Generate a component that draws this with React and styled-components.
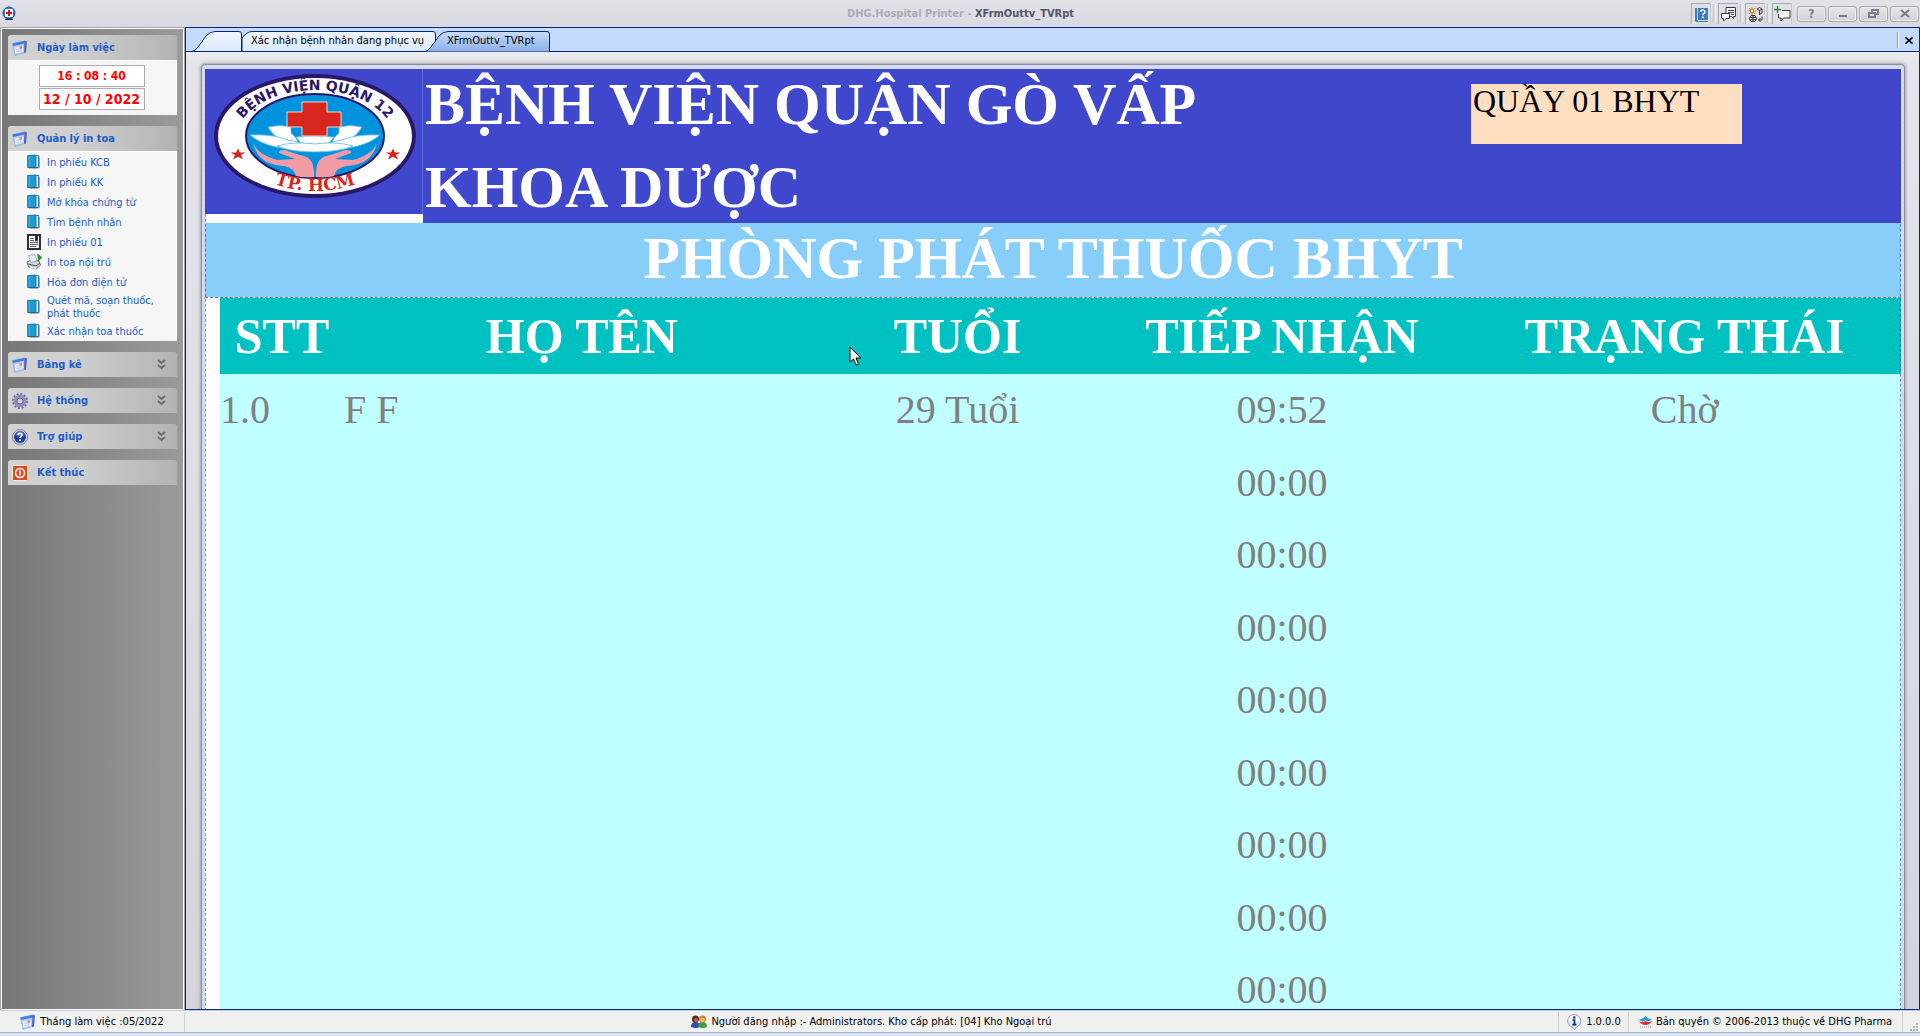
import React from "react";
import styled, { createGlobalStyle, css } from "styled-components";

const ui = `"DejaVu Sans Condensed", "Noto Sans", sans-serif`;
const serif = `"Liberation Serif", "Times New Roman", serif`;

const GlobalStyle = createGlobalStyle`
  *, *::before, *::after { box-sizing: border-box; }
  html, body { margin: 0; height: 100%; }
  body { font: 11px/13px ${ui}; color: #000; overflow: hidden; }
  button, input { font: inherit; color: inherit; padding: 0; margin: 0; }
  ul { list-style: none; margin: 0; padding: 0; }
  h1, h2, h3, p { margin: 0; }
  svg { display: block; flex: none; }
`;

const Shell = styled.div`
  height: 100vh;
  display: flex;
  flex-direction: column;
  background: #d9e4f2;
`;

const TitleBar = styled.header`
  flex: none;
  height: 27px;
  display: grid;
  grid-template-columns: 1fr auto 1fr;
  align-items: center;
  padding: 0 1px 0 2px;
  background: linear-gradient(#e2e3e8, #d8d9de);
`;

const Title = styled.h1`
  font: bold 11px/14px ${ui};
  color: #a9adb8;
  span { color: #54566a; }
`;

const TitleTools = styled.div`
  display: flex;
  align-items: center;
  justify-content: flex-end;
`;

const Tool = styled.button`
  width: 20px;
  height: 21px;
  display: grid;
  place-items: center;
  border: 1px solid #a9abb3;
  border-bottom: 0;
  border-right-color: #c9cbd1;
  background: #dfe0e5;
`;

const ToolRule = styled.span`
  width: 3px;
  height: 19px;
  margin: 0 2px;
  border-left: 1px solid #c0c2c8;
  border-right: 1px solid #f2f2f5;
`;

const WindowButtons = styled.div`
  display: flex;
  gap: 2px;
  margin-left: 5px;
`;

const WindowButton = styled.button`
  width: 29px;
  height: 16px;
  display: grid;
  place-items: center;
  border: 1px solid #a6a8b0;
  border-radius: 3px;
  background: linear-gradient(#e6e6ea, #d0d1d6);
  box-shadow: inset 0 0 0 1px #ededf0;
  font: bold 12px/14px ${ui};
  color: #7b7d88;
`;

const Work = styled.div`
  flex: 1;
  min-height: 0;
  display: flex;
`;

const Sidebar = styled.nav`
  flex: none;
  width: 185px;
  padding: 7px;
  display: flex;
  flex-direction: column;
  gap: 11px;
  border: 1px solid #a4a4a8;
  border-bottom: 0;
  box-shadow: inset 0 0 0 1px #fff;
  background: linear-gradient(90deg, #767676, #9b9b9b);
`;

const PanelHead = styled.button`
  width: 100%;
  height: 25px;
  display: flex;
  align-items: center;
  gap: 9px;
  padding: 0 11px 0 4px;
  border: 0;
  border-radius: 3px 3px 0 0;
  background: linear-gradient(90deg, #d2d2d2 0%, #cfcfcf 40%, #b3b3b3 100%);
  font: bold 11px/14px ${ui};
  color: #215dc6;
  text-align: left;
  span { flex: 1; }
`;

const PanelBody = styled.div`
  border: 1px solid #fff;
  border-bottom: 0;
  background: #f5f5f5;
`;

const Clock = styled(PanelBody)`
  display: flex;
  flex-direction: column;
  align-items: center;
  gap: 1px;
  padding: 4px 2px 5px 0;
`;

const ClockField = styled.input`
  width: 106px;
  height: 22px;
  border: 1px solid #acacac;
  background: #fff;
  color: #f00;
  text-align: center;
  font: bold ${(p) => (p.$large ? 14 : 12)}px/16px ${ui};
`;

const MenuLink = styled.a`
  min-height: ${(p) => (p.$tall ? 29 : 20)}px;
  display: flex;
  align-items: center;
  gap: 5px;
  padding-left: 17px;
  color: #215dc6;
  text-decoration: none;
`;

const Desk = styled.main`
  flex: 1;
  min-width: 0;
  display: flex;
  flex-direction: column;
  border: 1px solid #00287e;
  background: #e4e6ea;
`;

const TabBar = styled.div`
  flex: none;
  height: 24px;
  display: flex;
  align-items: flex-end;
  justify-content: space-between;
  border-bottom: 1px solid #00287e;
  background: #c4dafa;
`;

const Tabs = styled.div`
  display: flex;
  padding-left: 6px;
  margin-bottom: -1px;
`;

const Tab = styled.button`
  position: relative;
  height: 21px;
  width: ${(p) => p.$width}px;
  margin-right: ${(p) => (p.$overlap ? -11 : 0)}px;
  padding: 0 0 2px ${(p) => p.$pad}px;
  border: 0;
  background: none;
  text-align: left;
  white-space: nowrap;
  z-index: ${(p) => (p.$active ? 1 : 0)};
  svg { position: absolute; inset: 0; z-index: -1; }
`;

const CloseTab = styled.button`
  width: 22px;
  height: 16px;
  margin-bottom: 3px;
  display: grid;
  place-items: center;
  border: 0;
  border-left: 1px solid #6f9bd8;
  box-shadow: inset 1px 0 0 #fff;
  background: none;
`;

const Preview = styled.div`
  flex: 1;
  min-height: 0;
  padding: 12px 14px 0 15px;
  overflow: hidden;
  background: linear-gradient(#ebecf0, #e3e5ea 10px, #d3d5da);
`;

const Sheet = styled.article`
  border: 1px solid #8c8d96;
  border-radius: 4px 4px 0 0;
  padding: 4px 3px 0;
  background: #d5daf3;
  box-shadow: 0 0 3px 1px #a5a6ac;
`;

const Paper = styled.div`
  position: relative;
  background: #fff;
  font-family: ${serif};
  &::before {
    content: "";
    position: absolute;
    inset: 0;
    border: 1px dashed rgba(70, 70, 70, 0.6);
    border-width: 0 1px;
    pointer-events: none;
  }
`;

const Banner = styled.header`
  display: flex;
  align-items: flex-start;
  color: #fff;
`;

const LogoCell = styled.div`
  width: 218px;
  height: 145px;
  padding: 4px 0 0 9px;
  border-right: 1px solid #5d6ae0;
  background: #3f48cc;
`;

const BannerText = styled.div`
  flex: 1;
  height: 154px;
  display: flex;
  justify-content: space-between;
  padding: 0 159px 0 2px;
  background: #3f48cc;
  h2 { font: bold 60px/83px ${serif}; margin-top: -6px; }
`;

const Counter = styled.p`
  width: 271px;
  height: 60px;
  margin-top: 15px;
  padding-left: 2px;
  background: #ffdfc0;
  color: #000;
  font: 32px/34px ${serif};
`;

const Room = styled.h2`
  height: 74px;
  background: #87cefa;
  color: #fff;
  text-align: center;
  font: bold 60px/70px ${serif};
`;

const TableWrap = styled.div`
  padding-left: 15px;
  border-top: 1px dashed #5a8088;
`;

const Queue = styled.table`
  width: 100%;
  table-layout: fixed;
  border-collapse: collapse;
  background: #c0ffff;
  color: #808080;
  th { height: 76px; padding: 0; background: #00c1c1; color: #fff; font: bold 50px/58px ${serif}; }
  td { height: 72px; padding: 0; font: 40px/46px ${serif}; text-align: center; }
  tr:nth-child(even) td { height: 73px; }
  td:nth-child(-n + 2) { text-align: left; }
`;

const StatusBar = styled.footer`
  flex: none;
  height: 23px;
  display: flex;
  align-items: center;
  border-top: 1px solid #c9cdd6;
  border-bottom: 1px solid #a9b5c8;
  margin-bottom: 3px;
  background: #f0f0f0;
`;

const StatusItem = styled.div`
  height: 20px;
  display: flex;
  align-items: center;
  justify-content: center;
  gap: 4px;
  border-right: 1px solid #d0d0d0;
  white-space: nowrap;
  ${(p) => (p.$grow ? css`flex: 1;` : css`width: ${p.$width}px;`)}
`;

const Grip = styled.span`
  width: 17px;
  display: flex;
  justify-content: flex-end;
  align-self: flex-end;
`;

const Pointer = styled.div`
  position: absolute;
  left: 644px;
  top: 277px;
`;

const AppIcon = () => (
  <svg width="14" height="15" viewBox="0 0 14 15">
    <path d="M4 12h6l1 2H3z" fill="#1d2b4a" />
    <circle cx="7" cy="7" r="6" fill="#2f7fd0" stroke="#1b4f9a" />
    <rect x="3" y="3" width="8" height="8" rx="1" fill="#fff" />
    <path d="M6 4h2v2h2v2H8v2H6V8H4V6h2z" fill="#e01010" />
  </svg>
);

const CalendarIcon = () => (
  <svg width="16" height="16" viewBox="0 0 16 16">
    <path d="M.5 3.500 12.500 1l.5 11.500L3 15.500z" fill="#b4cdf5" stroke="#8aa6dd" strokeWidth=".7" />
    <path d="M12.500 .5l2.500 1-1 11-2 .5z" fill="#5264ba" />
    <path d="M.5 3.500 12.500 1v2.500L1 6z" fill="#3f7ae6" />
    <path d="M3 7.500l8-1.500v5.500l-7.500 2z" fill="#edf4ff" />
    <path d="M4 9.700l6-1M4 11.700l6-1M6 7.500v5M8.500 7v5" stroke="#b4caf0" strokeWidth=".7" />
    <path d="M7.500 6.500l2.500-.4v2.500l-2.500.4z" fill="#ef7a6c" />
  </svg>
);

const BookIcon = () => (
  <svg width="16" height="16" viewBox="0 0 16 16">
    <path d="M4 2.500h10v11l-1 1H5z" fill="#a9a9a9" />
    <path d="M3 1.500h9.500v12H4z" fill="#d8f0fa" stroke="#1f6485" strokeWidth=".8" />
    <path d="M1.500 1.500l8.500-.5v12.500h-8.500z" fill="#1f9bd2" stroke="#1272a2" strokeWidth=".8" />
    <path d="M3.200 2v11" stroke="#57b9e2" strokeWidth=".7" />
    <path d="M2.500 13.800h9" stroke="#31576a" strokeWidth=".8" />
  </svg>
);

const NoteIcon = () => (
  <svg width="16" height="16" viewBox="0 0 16 16">
    <path d="M1 0h14v16H1z" fill="#2e3033" />
    <path d="M3 2h10v12H3z" fill="#fff" />
    <path d="M4 4.500h4M4 6.500h4M4 8.500h8M4 10.500h8M4 12.500h6" stroke="#5a5c60" />
    <path d="M9 2h3v6l-1.500-1.500L9 8z" fill="#2e3033" />
  </svg>
);

const PrinterIcon = () => (
  <svg width="16" height="16" viewBox="0 0 16 16">
    <path d="M1 8l4-2 8 1 1.500 4-4 4-8-2z" fill="#d3d5d8" stroke="#55585e" strokeWidth=".8" />
    <path d="M2.500 1.500l6-1 2.500 6-6 2z" fill="#e8f1ff" stroke="#7d92b8" strokeWidth=".7" />
    <path d="M2 10l8 2 4-3" stroke="#4a4d52" fill="none" />
    <path d="M4 13l6 1.500" stroke="#fff" />
    <path d="M11.500 0l4.500 3.500L12.500 7z" fill="#25a325" stroke="#136b13" strokeWidth=".5" />
  </svg>
);

const GearIcon = () => (
  <svg width="16" height="16" viewBox="0 0 16 16">
    <circle cx="8" cy="8" r="7" fill="none" stroke="#6d6ca6" strokeWidth="2" strokeDasharray="2 1.670" />
    <circle cx="8" cy="8" r="4.700" fill="none" stroke="#8f8ec0" strokeWidth="3.400" />
    <circle cx="8" cy="8" r="3" fill="#cfcfd6" stroke="#55546f" strokeWidth=".8" />
  </svg>
);

const HelpIcon = () => (
  <svg width="16" height="16" viewBox="0 0 16 16">
    <circle cx="8" cy="8" r="7.500" fill="#dfe3ee" stroke="#5d6377" strokeWidth=".8" />
    <circle cx="8" cy="8" r="6" fill="#1d3c9c" />
    <path d="M3 6a5.300 5.300 0 0 1 10 0q-5 2.500-10 0z" fill="#5b80d6" opacity=".7" />
    <path d="M6 6.200q0-2 2-2t2 1.700q0 1-1 1.600t-1 1.500" fill="none" stroke="#fff" strokeWidth="1.600" />
    <rect x="7.200" y="10.300" width="1.700" height="1.700" fill="#fff" />
  </svg>
);

const PowerIcon = () => (
  <svg width="16" height="16" viewBox="0 0 16 16">
    <rect x=".5" y=".5" width="15" height="15" rx="1" fill="#dc4a1f" stroke="#fbe5dc" />
    <circle cx="8" cy="8" r="4.500" fill="none" stroke="#fff" strokeWidth="1.500" />
    <path d="M8 5.500v5" stroke="#fff" strokeWidth="1.600" />
  </svg>
);

const Chevrons = () => (
  <svg width="9" height="11" viewBox="0 0 9 11" fill="none" stroke="#6d6d6d" strokeWidth="2">
    <path d="M1 1l3.500 3L8 1M1 6l3.500 3L8 6" />
  </svg>
);

const UsersIcon = () => (
  <svg width="16" height="14" viewBox="0 0 16 14">
    <path d="M0 12q0-5 4.500-5T9 12q-4 2-9 0z" fill="#2b4fc0" />
    <circle cx="4.500" cy="4" r="3.500" fill="#4a2a22" />
    <circle cx="5" cy="5" r="2" fill="#c8643c" />
    <path d="M7 12q0-5 4.500-5t4.500 5q-4 2-9 0z" fill="#3f9e3c" />
    <circle cx="11.500" cy="4" r="3.500" fill="#c98a2a" />
    <circle cx="11.500" cy="5" r="2.200" fill="#f2b866" />
  </svg>
);

const InfoIcon = () => (
  <svg width="16" height="16" viewBox="0 0 16 16">
    <path d="M8 .5a7 6.500 0 0 1 2 12.700L8.500 16 7 13.300A7 6.500 0 0 1 8 .5z" fill="#dfeaf6" stroke="#7a92ae" strokeWidth=".8" />
    <path d="M8 1.500a5.500 5 0 0 1 5.500 5q-5 2-11 0A5.500 5 0 0 1 8 1.500z" fill="#fff" />
    <path d="M6.500 6H8.500v4.500M6.300 10.600h4" stroke="#12206e" strokeWidth="1.600" fill="none" />
    <circle cx="8.300" cy="3.500" r="1.200" fill="#12206e" />
  </svg>
);

const PharmaIcon = () => (
  <svg width="13" height="12" viewBox="0 0 13 12">
    <path d="M0 3q4 1 6.500-3Q9 4 13 3 10 7 6.500 4 3 7 0 3z" fill="#2a95d6" />
    <path d="M0 5q3 2 6.500 0Q10 7 13 5q-2 4-6.500 4T0 5z" fill="#e0303c" />
    <path d="M1 11h11" stroke="#8b8b9b" strokeDasharray="1 1" />
  </svg>
);

const toolIcons = [
  ["Hướng dẫn", (
    <svg width="13" height="15" viewBox="0 0 13 15">
      <path d="M0 1h13v12H2.500v1H13v1H1L0 14z" fill="#3d7ab8" />
      <path d="M2.500 1v12" stroke="#dfe8f2" strokeWidth=".8" />
      <path d="M5.500 5q0-2 2.200-2t2.200 1.800q0 1-1 1.600t-1 1.800" fill="none" stroke="#fff" strokeWidth="1.500" />
      <rect x="7" y="9.500" width="1.700" height="1.700" fill="#fff" />
    </svg>
  )],
  ["Trao đổi", (
    <svg width="15" height="15" viewBox="0 0 15 15" fill="#f4f4f6" stroke="#3a3a3a">
      <path d="M5 .5h9.500v9h-2v2l-2-2H5z" />
      <path d="M7 3.500h6M7 5.500h6M10 7.500h3" />
      <path d="M.5 6.500h8v5H5l-2.500 2.500v-2.500h-2z" />
    </svg>
  )],
  ["Ngôn ngữ", (
    <svg width="15" height="15" viewBox="0 0 15 15" fill="none" stroke="#3a3a3a">
      <path d="M4 0v8M0 4h8M1 1l6 6M7 1L1 7" stroke="#d08a1a" />
      <circle cx="4" cy="4" r="1.800" fill="#fff" stroke="#c27b10" />
      <path d="M9 2l2.500-1.500L14 2v4l-2.500 1.500L11 7M9 2l2.500 1.500L14 2M11.500 3.500v4" />
      <path d="M1.500 10.500h7M1.500 12.500h7M3 8.500q-3 3 0 6h4q3-3 0-6zM5 8.500v6" />
      <path d="M10.500 13h3.500V9.500M12.500 11l-2 2 2 2" />
    </svg>
  )],
  ["Thêm ghi chú", (
    <svg width="17" height="16" viewBox="0 0 17 16" fill="none">
      <path d="M8 4.500h8v7.500H9.500L7 15v-3H4.500V8" fill="#f4f4f6" stroke="#3a3a3a" />
      <path d="M3.500 0v7M0 3.500h7" stroke="#2d8a2d" strokeWidth="1.300" />
    </svg>
  )],
];

const windowIcons = [
  ["Trợ giúp", <b key="q">?</b>],
  ["Thu nhỏ", <svg key="m" width="10" height="9"><path d="M1 7h8" stroke="#7b7d88" strokeWidth="2" /></svg>],
  ["Khôi phục", (
    <svg key="r" width="11" height="9" fill="none" stroke="#7b7d88" strokeWidth="2">
      <path d="M4 3V1h6v4H8" /><path d="M1 4h6v4H1z" />
    </svg>
  )],
  ["Đóng", <svg key="x" width="10" height="9"><path d="M1 1l8 7M9 1L1 8" stroke="#7b7d88" strokeWidth="2" /></svg>],
];

const Star = ({ x, y }) => (
  <path
    transform={`translate(${x} ${y})`}
    d="M0-5.500 2-1.500 7.500-1.500 3 1 5 5.500 0 2.700-5 5.500-3 1-7.500-1.500-2-1.500z"
    fill="#d8261c"
  />
);

const HospitalLogo = () => (
  <svg width="204" height="126" viewBox="0 0 204 126" role="img" aria-label="Logo bệnh viện">
    <ellipse cx="101" cy="63" rx="101" ry="62" fill="#2a1768" />
    <ellipse cx="101" cy="63" rx="97" ry="58" fill="#fff" />
    <ellipse cx="101" cy="63" rx="69" ry="42" fill="#0093dd" stroke="#2a1768" strokeWidth="2" />
    <g fill="#fff" stroke="#58b8e8" strokeWidth=".8">
      <path d="M54 54q12-3 23 0v6q6 4 8 12-22-2-31-18z" />
      <path d="M148 54q-12-3-23 0v6q-6 4-8 12 22-2 31-18z" />
      <path d="M36 62q24-1 38 5 14 2 22 8-40 4-60-13z" />
      <path d="M166 62q-24-1-38 5-14 2-22 8 40 4 60-13z" />
      <path d="M82 64q19-2 38 0l-5 6q-14 3-28 0z" />
      <path d="M63 73q18-5 38-2 20-3 38 2-14 6-38 6t-38-6z" />
    </g>
    <path d="M88 29h25v10h14v15h-14v9H88v-9H73V39h15z" fill="#d8261c" stroke="#e8d8d4" />
    <path
      d="M39 70q5 12 24 17l18-1-16-6q-1-3 6-3 11 4 19 6 11 3 10 21-10 1-18-1-2-8-12-10-26-1-31-23z"
      fill="#f19ca4"
    />
    <path
      d="M163 70q-5 12-24 17l-18-1 16-6q1-3-6-3-11 4-19 6-11 3-10 21 10 1 18-1 2-8 12-10 26-1 31-23z"
      fill="#f19ca4"
    />
    <Star x="24" y="81" />
    <Star x="179" y="81" />
    <path id="arcTop" d="M22 66a79 49 0 0 1 158 0" fill="none" />
    <path id="arcBottom" d="M18 63a83 55 0 0 0 166 0" fill="none" />
    <text fill="#2a1768" fontFamily="DejaVu Sans, sans-serif" fontWeight="bold" fontSize="14" textAnchor="middle">
      <textPath href="#arcTop" startOffset="50%">BỆNH VIỆN QUẬN 12</textPath>
    </text>
    <text fill="#d8261c" fontFamily="DejaVu Serif, serif" fontWeight="bold" fontSize="17" textAnchor="middle">
      <textPath href="#arcBottom" startOffset="50%">TP. HCM</textPath>
    </text>
  </svg>
);

const menu = [
  ["In phiếu KCB", BookIcon],
  ["In phiếu KK", BookIcon],
  ["Mở khóa chứng từ", BookIcon],
  ["Tìm bệnh nhân", BookIcon],
  ["In phiếu 01", NoteIcon],
  ["In toa nội trú", PrinterIcon],
  ["Hóa đơn điện tử", BookIcon],
  ["Quét mã, soạn thuốc, phát thuốc", BookIcon, true],
  ["Xác nhận toa thuốc", BookIcon],
];

const collapsed = [
  ["Bảng kê", CalendarIcon, true],
  ["Hệ thống", GearIcon, true],
  ["Trợ giúp", HelpIcon, true],
  ["Kết thúc", PowerIcon, false],
];

const TabShape = ({ width, active, id }) => (
  <svg width={width} height="21" viewBox={`0 0 ${width} 21`}>
    <defs>
      <linearGradient id={id} x2="0" y2="1">
        <stop stopColor={active ? "#c8dcf8" : "#f0f5fd"} />
        <stop offset="1" stopColor={active ? "#8cb0e4" : "#dbe8fb"} />
      </linearGradient>
    </defs>
    <path
      d={`M0 20.500Q3 20 6 16L14 5Q18 .5 23 .5H${width - 3}Q${width - 0.5} .5 ${width - 0.5} 3V20.500`}
      fill={`url(#${id})`}
      stroke="#00287e"
    />
    {!active && <path d={`M0 20.500H${width}`} stroke="#00287e" />}
  </svg>
);

const MiddleTabShape = ({ width, id }) => (
  <svg width={width} height="21" viewBox={`0 0 ${width} 21`}>
    <defs>
      <linearGradient id={id} x2="0" y2="1">
        <stop stopColor="#f0f5fd" />
        <stop offset="1" stopColor="#dbe8fb" />
      </linearGradient>
    </defs>
    <path
      d={`M0 20.500V7Q5 .5 10 .5H${width - 3}Q${width - 0.5} .5 ${width - 0.5} 3V20.500z`}
      fill={`url(#${id})`}
      stroke="#00287e"
    />
  </svg>
);

const rows = [
  ["1.0", "F F", "29 Tuổi", "09:52", "Chờ"],
  ...Array.from({ length: 8 }, () => ["", "", "", "00:00", ""]),
];

export default function App() {
  return (
    <Shell>
      <GlobalStyle />
      <TitleBar>
        <AppIcon />
        <Title>DHG.Hospital Printer - <span>XFrmOuttv_TVRpt</span></Title>
        <TitleTools>
          {toolIcons.map(([label, icon], i) => (
            <React.Fragment key={label}>
              {i > 0 && <ToolRule />}
              <Tool aria-label={label}>{icon}</Tool>
            </React.Fragment>
          ))}
          <WindowButtons>
            {windowIcons.map(([label, icon]) => (
              <WindowButton key={label} aria-label={label}>{icon}</WindowButton>
            ))}
          </WindowButtons>
        </TitleTools>
      </TitleBar>

      <Work>
        <Sidebar>
          <section>
            <PanelHead><CalendarIcon /><span>Ngày làm việc</span></PanelHead>
            <Clock>
              <ClockField aria-label="Giờ" defaultValue="16 : 08 : 40" />
              <ClockField aria-label="Ngày" $large defaultValue="12 / 10 / 2022" />
            </Clock>
          </section>
          <section>
            <PanelHead><CalendarIcon /><span>Quản lý in toa</span></PanelHead>
            <PanelBody>
              <ul>
                {menu.map(([label, Icon, tall]) => (
                  <li key={label}><MenuLink href="#" $tall={tall}><Icon /><span>{label}</span></MenuLink></li>
                ))}
              </ul>
            </PanelBody>
          </section>
          {collapsed.map(([label, Icon, more]) => (
            <PanelHead key={label}><Icon /><span>{label}</span>{more && <Chevrons />}</PanelHead>
          ))}
        </Sidebar>

        <Desk>
          <TabBar>
            <Tabs>
              <Tab $width={50} $pad={20} aria-label="Trang chính"><TabShape id="t1" width={50} /></Tab>
              <Tab $width={194} $pad={9} $overlap><MiddleTabShape id="t2" width={194} />Xác nhận bệnh nhân đang phục vụ</Tab>
              <Tab $width={125} $pad={22} $active><TabShape id="t3" width={125} active />XFrmOuttv_TVRpt</Tab>
            </Tabs>
            <CloseTab aria-label="Đóng tab">
              <svg width="8" height="7"><path d="M0 0l8 7M8 0L0 7" stroke="#000" strokeWidth="1.600" /></svg>
            </CloseTab>
          </TabBar>
          <Preview>
            <Sheet>
              <Paper>
                <Banner>
                  <LogoCell><HospitalLogo /></LogoCell>
                  <BannerText>
                    <h2>BỆNH VIỆN QUẬN GÒ VẤP<br />KHOA DƯỢC</h2>
                    <Counter>QUẦY 01 BHYT</Counter>
                  </BannerText>
                </Banner>
                <Room>PHÒNG PHÁT THUỐC BHYT</Room>
                <TableWrap>
                  <Queue>
                    <colgroup>
                      <col width="124" /><col width="28.300%" /><col width="16.400%" /><col width="22.200%" /><col />
                    </colgroup>
                    <thead>
                      <tr><th>STT</th><th>HỌ TÊN</th><th>TUỔI</th><th>TIẾP NHẬN</th><th>TRẠNG THÁI</th></tr>
                    </thead>
                    <tbody>
                      {rows.map((row, r) => (
                        <tr key={r}>{row.map((cell, c) => <td key={c}>{cell}</td>)}</tr>
                      ))}
                    </tbody>
                  </Queue>
                </TableWrap>
                <Pointer>
                  <svg width="13" height="20" viewBox="0 0 13 20">
                    <path d="M1 1v15l3.500-3 2.500 6 2.500-1-2.500-6h5z" fill="#fff" stroke="#000" />
                  </svg>
                </Pointer>
              </Paper>
            </Sheet>
          </Preview>
        </Desk>
      </Work>

      <StatusBar>
        <StatusItem $width={185}><CalendarIcon />Tháng làm việc :05/2022</StatusItem>
        <StatusItem $grow><UsersIcon />Người đăng nhập :- Administrators. Kho cấp phát: [04] Kho Ngoại trú</StatusItem>
        <StatusItem $width={70}><InfoIcon />1.0.0.0</StatusItem>
        <StatusItem $width={274}><PharmaIcon />Bản quyền © 2006-2013 thuộc về DHG Pharma</StatusItem>
        <Grip>
          <svg width="10" height="9" fill="#b4b4b4">
            <path d="M6 0h2v2H6zM3 3h2v2H3zM6 3h2v2H6zM0 6h2v2H0zM3 6h2v2H3zM6 6h2v2H6z" />
          </svg>
        </Grip>
      </StatusBar>
    </Shell>
  );
}
